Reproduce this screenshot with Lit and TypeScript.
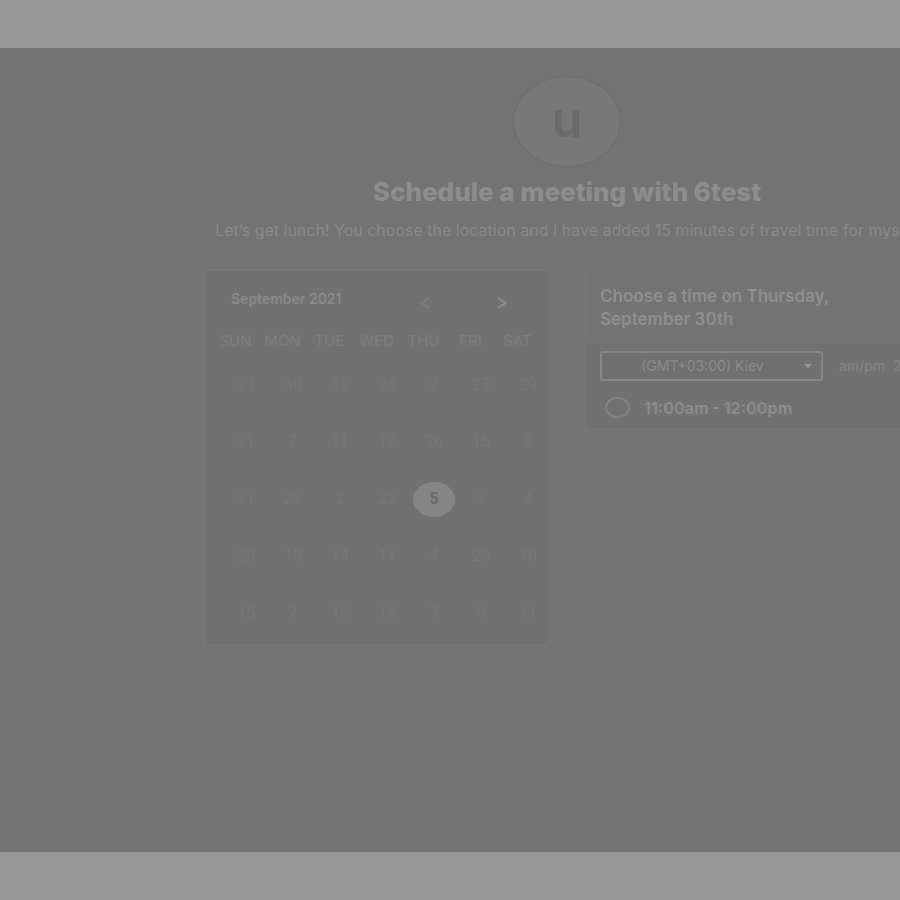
import { LitElement, html, css } from "lit";
import { customElement, state } from "lit/decorators.js";
import { classMap } from "lit/directives/class-map.js";

const DAYS = ["SUN", "MON", "TUE", "WED", "THU", "FRI", "SAT"];
const WEEKS = [
  [23, 30, 10, 25, 2, 23, 29],
  [21, 7, 11, 17, 26, 16, 8],
  [21, 22, 2, 22, 5, 3, 4],
  [20, 15, 14, 11, 4, 25, 10],
  [15, 7, 16, 15, 7, 9, 11],
];

@customElement("month-calendar")
export class MonthCalendar extends LitElement {
  @state() private selected = "2-4";

  static styles = css`
    :host {
      display: block;
      box-sizing: border-box;
      border: 2px solid #767676;
      border-radius: 4px;
      background: #717171;
      padding: 16px 7px 3px;
    }
    .head {
      display: flex;
      align-items: center;
      justify-content: space-between;
      padding: 0 28px 0 19px;
      height: 28px;
    }
    h2 {
      margin: 0;
      font-size: 14px;
      line-height: 20px;
      font-weight: 600;
      color: #8a8a8a;
      padding-bottom: 4px;
    }
    .nav {
      display: flex;
      gap: 53px;
      padding-top: 4px;
    }
    button {
      border: 0;
      padding: 0;
      background: none;
      font: inherit;
      color: inherit;
    }
    .nav button {
      width: 24px;
      height: 20px;
      display: grid;
      place-items: center;
    }
    .prev {
      color: #7e7e7e;
    }
    .next {
      color: #919191;
    }
    svg {
      display: block;
      fill: none;
      stroke: currentColor;
      stroke-width: 2;
    }
    table {
      width: 329px;
      table-layout: fixed;
      border-collapse: collapse;
      margin-top: 10px;
    }
    th {
      padding: 0;
      height: 31px;
      font-size: 15px;
      font-weight: 400;
      text-align: center;
      line-height: 31px;
      color: #7d7d7d;
    }
    td {
      padding: 0;
      height: 57px;
    }
    .date {
      display: block;
      box-sizing: border-box;
      width: 42px;
      height: 35px;
      margin: 2px -8px 0 13px;
      padding-bottom: 2px;
      border-radius: 50%;
      font-family: Roboto, sans-serif;
      font-size: 16px;
      text-align: center;
      color: #777;
    }
    .date.on {
      background: #858585;
      color: #6a6a6a;
      font-weight: 700;
    }
  `;

  render() {
    return html`
      <div class="head">
        <h2>September 2021</h2>
        <div class="nav">
          <button class="prev" aria-label="Previous month">
            <svg width="10" height="12" viewBox="0 0 10 12"><path d="M9 1 1.5 6 9 11" /></svg>
          </button>
          <button class="next" aria-label="Next month">
            <svg width="10" height="12" viewBox="0 0 10 12"><path d="M1 1 8.5 6 1 11" /></svg>
          </button>
        </div>
      </div>
      <table>
        <thead>
          <tr>${DAYS.map((d) => html`<th scope="col">${d}</th>`)}</tr>
        </thead>
        <tbody>
          ${WEEKS.map(
            (week, r) => html`<tr>
              ${week.map((n, c) => {
                const key = `${r}-${c}`;
                return html`<td>
                  <button
                    class=${classMap({ date: true, on: key === this.selected })}
                    @click=${() => (this.selected = key)}
                  >${n}</button>
                </td>`;
              })}
            </tr>`
          )}
        </tbody>
      </table>
    `;
  }
}

@customElement("time-picker")
export class TimePicker extends LitElement {
  static styles = css`
    :host {
      display: block;
      box-sizing: border-box;
      border: 2px solid #757575;
      background: #717171;
    }
    h2 {
      margin: 0;
      padding: 14px 14px 11px;
      border-bottom: 2px solid #757575;
      font-size: 17px;
      line-height: 23px;
      font-weight: 600;
      color: #8f8f8f;
      background: #737373;
    }
    .line {
      white-space: nowrap;
      display: block;
    }
    .zone {
      display: flex;
      align-items: center;
      gap: 16px;
      padding: 7px 0 0 14px;
      white-space: nowrap;
      font-size: 14px;
      color: #848484;
    }
    .pick {
      position: relative;
      flex: none;
      width: 223px;
    }
    select {
      display: block;
      appearance: none;
      box-sizing: border-box;
      width: 100%;
      height: 30px;
      margin: 0;
      padding: 0 32px 2px 14px;
      border: 2px solid #868686;
      border-radius: 3px;
      background: #707070;
      color: #8b8b8b;
      font: inherit;
      text-align: center;
      text-align-last: center;
    }
    .caret {
      position: absolute;
      right: 11px;
      top: 13px;
      fill: #989898;
      pointer-events: none;
    }
    .formats {
      display: flex;
      gap: 8px;
      padding-bottom: 2px;
    }
    .formats button {
      border: 0;
      padding: 0;
      background: none;
      font: inherit;
      color: inherit;
    }
    .slot {
      display: flex;
      align-items: center;
      gap: 14px;
      padding: 16px 19px 10px;
      font-size: 16px;
      line-height: 20px;
      font-weight: 700;
      color: #8b8b8b;
    }
    .slot input {
      appearance: none;
      flex: none;
      box-sizing: border-box;
      width: 25px;
      height: 21px;
      margin: 0;
      border: 2px solid #828282;
      border-radius: 50%;
    }
  `;

  render() {
    return html`
      <h2>
        <span class="line">Choose a time on Thursday,</span>
        <span class="line">September 30th</span>
      </h2>
      <div class="zone">
        <div class="pick">
          <select aria-label="Time zone">
            <option>(GMT+03:00) Kiev</option>
          </select>
          <svg class="caret" width="8" height="4" viewBox="0 0 8 4"><path d="M0 0h8L4 4z" /></svg>
        </div>
        <div class="formats">
          <button>am/pm</button>
          <button>24h</button>
        </div>
      </div>
      <label class="slot">
        <input type="radio" name="slot" />
        <span>11:00am - 12:00pm</span>
      </label>
    `;
  }
}

@customElement("app-root")
export class AppRoot extends LitElement {
  static styles = css`
    :host {
      display: flex;
      flex-direction: column;
      min-height: 100vh;
      font-family: Inter, Roboto, sans-serif;
      background: #737373;
      overflow: hidden;
    }
    .bar {
      flex: none;
      height: 48px;
      background: #969696;
    }
    main {
      flex: 1;
      margin: 0 -31px 0 203px;
      padding-top: 28px;
    }
    header {
      display: flex;
      flex-direction: column;
      align-items: center;
      white-space: nowrap;
    }
    .logo {
      display: grid;
      place-items: center;
      box-sizing: border-box;
      width: 108px;
      height: 91px;
      border: 1px solid #6e6e6e;
      border-radius: 50%;
      background: #777;
      color: #6a6a6a;
      font-size: 50px;
      line-height: 48px;
      font-weight: 600;
      padding-bottom: 6px;
    }
    h1 {
      margin: 9px 0 0;
      font-size: 26px;
      line-height: 32px;
      font-weight: 800;
      color: #8d8d8d;
    }
    p {
      margin: 10px 0 0;
      font-size: 16px;
      line-height: 24px;
      color: #898989;
    }
    .columns {
      display: grid;
      grid-template-columns: 348px 1fr;
      gap: 33px;
      align-items: start;
      margin-top: 27px;
    }
  `;

  render() {
    return html`
      <div class="bar"></div>
      <main>
        <header>
          <div class="logo">u</div>
          <h1>Schedule a meeting with 6test</h1>
          <p>Let’s get lunch! You choose the location and I have added 15 minutes of travel time for myself</p>
        </header>
        <div class="columns">
          <month-calendar></month-calendar>
          <time-picker></time-picker>
        </div>
      </main>
      <div class="bar"></div>
    `;
  }
}
